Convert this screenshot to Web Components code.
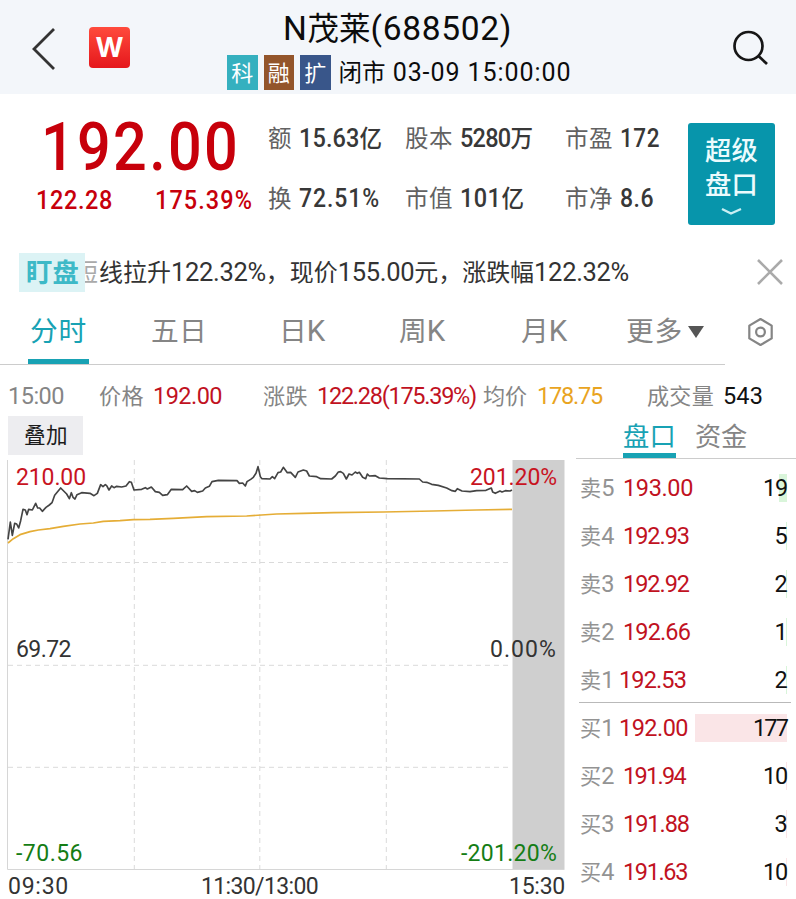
<!DOCTYPE html>
<html lang="zh-CN">
<head>
<meta charset="utf-8">
<title>N茂莱(688502)</title>
<style>
html,body{margin:0;background:#fff}
body{width:796px;height:899px;overflow:hidden;font-family:Roboto,"Noto Sans CJK SC",sans-serif}
</style>
</head>
<body>
<stock-page></stock-page>
<script>
const define=(name,html,setup)=>customElements.define(name,class extends HTMLElement{
  connectedCallback(){
    if(this.shadowRoot)return;
    this.attachShadow({mode:'open'}).innerHTML=typeof html==='function'?html(this):html;
    if(setup)setup(this);
  }
});

/* One line of mixed Latin and Chinese text, tracked to the width w; sx condenses the glyphs. */
define('fit-text',el=>{
  const runs=el.getAttribute('t').match(/[\u3000-\u9fff\uff00-\uffef]+|[^\u3000-\u9fff\uff00-\uffef]+/g);
  const one=runs.length===1;
  return `<style>:host{display:block;white-space:pre;line-height:1.2;flex:none}
  #t{display:inline-block;white-space:pre;transform-origin:0 50%}
  .c{font-size:var(--cjk,.94em);line-height:0;font-family:"Noto Sans CJK SC",sans-serif}</style><span id="t">`+
  runs.map(r=>/[\u3000-\u9fff\uff00-\uffef]/.test(r)?`<span class="c${one?' fit':''}">${r}</span>`:`<span class="fit">${r}</span>`).join('')+'</span>';
},el=>{
  const w=+el.getAttribute('w'),sx=+(el.getAttribute('sx')||1);
  if(!w)return;
  el.style.width=w+'px';
  const t=el.shadowRoot.getElementById('t'),fits=[...el.shadowRoot.querySelectorAll('.fit')];
  const n=fits.reduce((s,f)=>s+f.textContent.length,0);
  const ls=(w/sx-t.getBoundingClientRect().width)/n;
  fits.forEach(f=>f.style.letterSpacing=ls+'px');
  if(sx!==1)t.style.transform=`scaleX(${sx})`;
});

define('tag-badge',`<style>:host{display:flex;width:30.5px;height:35px;align-items:center;justify-content:center;color:#fff;font:400 22px/1 "Noto Sans CJK SC",sans-serif}
span{margin-top:-3px}</style><span><slot></slot></span>`);

define('page-header',`<style>
:host{display:flex;height:94px;background:#f3f6fa;color:#0c0c0c}
svg{display:block;flex:none}
.logo{margin:27px 0 0 29px;width:41px;height:41px;border-radius:4px;background:linear-gradient(#ff4b3c,#e5171c);color:#fff;font:700 27px/41px Inter,sans-serif;text-align:center;flex:none}
.mid{margin-left:97px;width:346px;padding-top:9px;flex:none}
.title{font-size:33.5px;margin-left:56px;line-height:40px}
.sub{display:flex;gap:6px;margin-top:6px;align-items:center}
.date{font-size:25px;margin-left:2px;line-height:35px}
.find{margin:30px 0 0 158px}
</style>
<svg style="margin:26px 0 0 30px" width="30" height="46" fill="none" stroke="#333" stroke-width="2.8"><path d="M24 3 4 23 24 43"/></svg>
<div class="logo">W</div>
<div class="mid"><fit-text class="title" w="229" t="N茂莱(688502)"></fit-text>
<div class="sub"><tag-badge style="background:#35b0bf">科</tag-badge><tag-badge style="background:#93552b">融</tag-badge><tag-badge style="background:#39568a">扩</tag-badge><fit-text class="date" w="233" t="闭市 03-09 15:00:00"></fit-text></div></div>
<svg class="find" width="40" height="40" fill="none" stroke="#161616" stroke-width="2.7"><circle cx="17.5" cy="16" r="14"/><path d="m27.5 26 8.5 8"/></svg>`);

define('quote-panel',`<style>
:host{display:flex;height:146px;color:#c7000b}
.price{padding:29px 0 0 36px;box-sizing:border-box;width:268px;flex:none}
.big{font-size:67.5px;line-height:48px;font-weight:500;margin-left:5px}
.chg{display:flex;gap:42px;margin-top:15.5px;font-size:25.5px;font-weight:500}
.chg fit-text{line-height:26px}
.stats{display:grid;grid-template-columns:137px 160px 123px;grid-template-rows:60px 60px;padding-top:15px;font-size:25px;height:120px;flex:none}
.stats fit-text{line-height:60px}
.s{display:flex}.l{color:#626262;margin-right:7px}.v{color:#383838;font-weight:500;--cjk:.96em}
.btn{margin-top:29px;width:87px;height:102px;background:#0795ab;border-radius:3px;color:#ecfbfd;font-size:28px;font-weight:500;padding:11px 0 0 17px;box-sizing:border-box;flex:none}
.btn fit-text{line-height:34px}
svg{display:block;margin:5px 0 0 16px}
</style>
<div class="price"><fit-text class="big" w="199" sx=".88" t="192.00"></fit-text><div class="chg"><fit-text w="77" sx=".92" t="122.28"></fit-text><fit-text w="98" sx=".92" t="175.39%"></fit-text></div></div>
<div class="stats">
<div class="s"><fit-text class="l" w="24" t="额"></fit-text><fit-text class="v" w="83" sx=".94" t="15.63亿"></fit-text></div>
<div class="s"><fit-text class="l" w="48" t="股本"></fit-text><fit-text class="v" w="73" sx=".94" t="5280万"></fit-text></div>
<div class="s"><fit-text class="l" w="48" t="市盈"></fit-text><fit-text class="v" w="40" sx=".9" t="172"></fit-text></div>
<div class="s"><fit-text class="l" w="24" t="换"></fit-text><fit-text class="v" w="81" sx=".92" t="72.51%"></fit-text></div>
<div class="s"><fit-text class="l" w="48" t="市值"></fit-text><fit-text class="v" w="64" sx=".94" t="101亿"></fit-text></div>
<div class="s"><fit-text class="l" w="48" t="市净"></fit-text><fit-text class="v" w="34" sx=".92" t="8.6"></fit-text></div>
</div>
<div class="btn"><fit-text w="53" t="超级"></fit-text><fit-text w="53" t="盘口"></fit-text><svg width="22" height="10" fill="none" stroke="#c9eff3" stroke-width="2.4"><path d="m1 2 9 4.5L20 2"/></svg></div>`);

define('news-ticker',`<style>
:host{display:flex;height:64px;align-items:center;color:#333}
.tag{width:66px;height:39px;margin-left:19px;background:#dcf3f5;color:#3db9c7;font-size:28px;font-weight:700;padding-left:7px;box-sizing:border-box;flex:none}
.tag fit-text{line-height:39px}
.cut{width:13px;overflow:hidden;display:flex;justify-content:flex-end;color:#aaa;flex:none;font-size:25.5px}
.msg{width:673px;font-size:25.5px;flex:none;display:flex}
.cut fit-text,.msg fit-text{line-height:40px}
</style><div class="tag"><fit-text w="53" t="盯盘"></fit-text></div><div class="cut"><fit-text w="24" t="短"></fit-text></div>
<div class="msg"><fit-text w="530" style="margin-left:1px" t="线拉升122.32%，现价155.00元，涨跌幅122.32%"></fit-text></div>
<svg style="margin-left:-14px" width="26" height="26" fill="none" stroke="#aaa" stroke-width="2.6"><path d="m1 1 24 24M25 1 1 25"/></svg>`);

define('period-tabs',`<style>
:host{display:flex;height:61px;color:#858585;font-size:29.5px}
.bar{height:60px;border-bottom:1px solid #ccc;display:grid;grid-template-columns:124px 127px 120px 122px 105px 60px 20px;padding-left:28px;width:697px;flex:none}
fit-text{line-height:54px}
.on{color:#18a2b4;width:61px;height:55px;border-bottom:5px solid #18a2b4}
.on fit-text{margin-left:2px}
.tri{width:0;height:0;border:8px solid transparent;border-top:12px solid #555;border-bottom:0;margin:22px 0 0 2px}
svg{margin:13px 0 0 22px}
</style><div class="bar"><div class="on"><fit-text w="57" t="分时"></fit-text></div><fit-text style="margin-left:-1px" w="56" t="五日"></fit-text><fit-text w="46" t="日K"></fit-text><fit-text w="47" t="周K"></fit-text><fit-text w="46" t="月K"></fit-text><fit-text w="57" t="更多"></fit-text><div class="tri"></div></div>
<svg width="28" height="30" fill="none" stroke="#858585" stroke-width="2.2"><path stroke-linejoin="round" d="m13.5 2 11.2 6.6v12.8L13.5 28 2.3 21.4V8.6Z"/><circle cx="13.5" cy="15" r="4.4"/></svg>`);

define('tick-info',`<style>
:host{display:grid;height:51px;grid-template-columns:91px 54px 110px 54px 166px 54px 109px 77px 50px;padding-left:8px;font-size:23.5px;color:#858585}
fit-text{line-height:63px}
.r{color:#c1121f}.o{color:#e9a41f}.k{color:#111}
</style><fit-text w="56" t="15:00"></fit-text><fit-text w="45" t="价格"></fit-text><fit-text class="r" w="69" t="192.00"></fit-text><fit-text w="45" t="涨跌"></fit-text><fit-text class="r" w="159" t="122.28(175.39%)"></fit-text><fit-text w="44" t="均价"></fit-text><fit-text class="o" w="65" t="178.75"></fit-text><fit-text w="67" style="margin-left:1px" t="成交量"></fit-text><fit-text class="k" w="40" t="543"></fit-text>`);

define('price-chart',`<style>
:host{display:block;width:568px;flex:none;color:#333;font-size:23px}
.add{margin-left:8px;width:75px;height:39px;background:#ededf0;color:#1b1b1b;box-sizing:border-box;padding-left:16px}
.add fit-text{line-height:39px}
.plot{position:relative;height:410px;margin:5px 0 0 7px;width:558px}
svg{position:absolute;inset:0}
.lab{position:absolute;inset:0 8px 0 9px;display:flex;flex-direction:column;justify-content:space-between;padding:2px 0 0}
.lab div{display:flex;justify-content:space-between}
.mid{margin-top:-33px}
fit-text{line-height:32px}
.r{color:#c8141f}.g{color:#157d15}
.axis{display:grid;grid-template-columns:193px 308px 60px;padding:1px 0 0 8px}
</style>
<div class="add"><fit-text w="44" t="叠加"></fit-text></div>
<div class="plot"><svg width="558" height="410" viewBox="7 460 558 410" fill="none">
<path fill="#cfcfcf" d="M512.5 460h52v409h-52z"/>
<path stroke="#dadada" stroke-dasharray="5 4" d="M134.3 460v409M259.8 460v409M386.3 460v409M8 562.5h500M8 665.3h500M8 767.3h500"/>
<path stroke="#d6d6d6" d="M7.5 460v409.5h557"/>
<g transform="translate(0 450) scale(.33333)" stroke-linejoin="round">
<polyline stroke="#e5ad36" stroke-width="5" points="24,279 40,266 60,254 90,245 115,240 150,236 190,229 240,222 280,219 310,214 360,212 400,209 450,208 520,205 620,200 740,198 830,192 910,190 1000,188 1150,186 1300,183 1430,180 1536,178"/>
<polyline stroke="#444" stroke-width="5" points="24,268 31,216 37,256 44,220 50,222 56,234 62,212 69,178 76,180 81,194 86,178 97,180 107,160 113,174 119,174 127,184 138,172 148,165 156,158 164,136 182,114 200,132 208,146 214,128 219,142 225,147 231,134 245,128 270,130 282,137 292,130 302,104 309,110 316,104 320,107 327,120 335,108 342,113 350,109 365,111 378,108 388,95 394,97 402,120 425,118 436,113 442,117 454,111 466,125 478,127 488,136 502,134 514,118 548,119 560,108 575,124 584,122 592,127 608,123 616,114 628,109 636,95 655,91 711,92 718,100 728,99 736,108 741,95 752,88 760,82 768,70 774,50 781,80 786,86 810,87 817,80 824,86 834,68 842,66 850,52 862,68 872,67 886,82 894,66 910,60 920,63 928,78 950,80 962,86 995,87 1006,78 1015,66 1022,65 1030,70 1039,87 1047,72 1056,75 1066,66 1072,70 1078,67 1088,82 1097,86 1102,72 1108,78 1126,77 1138,84 1162,86 1258,87 1268,96 1280,97 1295,103 1315,106 1340,114 1356,122 1366,124 1372,116 1386,123 1410,125 1430,122 1458,121 1474,114 1478,126 1486,130 1500,123 1506,126 1516,122 1530,123 1536,120"/></g></svg>
<div class="lab"><div class="r"><fit-text w="70" t="210.00"></fit-text><fit-text w="87" t="201.20%"></fit-text></div>
<div class="mid"><fit-text w="55" t="69.72"></fit-text><fit-text w="67" t="0.00%"></fit-text></div>
<div class="g"><fit-text w="67" t="-70.56"></fit-text><fit-text w="96" t="-201.20%"></fit-text></div></div></div>
<div class="axis"><fit-text w="61" t="09:30"></fit-text><fit-text w="117" t="11:30/13:00"></fit-text><fit-text w="56" t="15:30"></fit-text></div>`);

define('book-row',el=>{
  const a=k=>el.getAttribute(k),one=a('n').endsWith('1');
  return `<style>:host{display:flex;height:48px;align-items:center;position:relative;padding-left:12px;width:207px;font-size:23.5px;box-sizing:content-box}
  fit-text{line-height:48px;--cjk:.9em}.l{color:#939393}.p{color:#c1121f;margin-left:${one?8:9}px}
  .v{margin-left:auto;position:relative;color:#111}
  i{position:absolute;right:0;top:10px;height:28px;width:${a('bar')}px;background:${a('n')[0]==='卖'?'#d9f5da':'#fae5e7'}}</style>
  <i></i><fit-text class="l" w="${one?31:34}" t="${a('n')}"></fit-text><fit-text class="p" w="${a('w')}" t="${a('p')}"></fit-text><fit-text class="v" w="${a('v').length===3?34:a('v').length*11.5+1}" t="${a('v')}"></fit-text>`;
});

define('order-book',`<style>
:host{display:block;width:228px;flex:none}
nav{height:42px;display:flex;border-bottom:1px solid #ccc;margin-left:8px;padding-left:47px;color:#858585;font-size:28px}
.on{width:53px;height:37px;border-bottom:5px solid #18a2b4;color:#18a2b4;margin-right:19px}
nav fit-text{line-height:41px}
.rows{padding-top:5px;height:239px;box-sizing:border-box}
hr{border:0;height:1px;background:#b9b9b9;margin:4px 5px 1px 11px}
</style><nav><div class="on"><fit-text w="53" t="盘口"></fit-text></div><fit-text w="52" t="资金"></fit-text></nav>
<div class="rows"><book-row n="卖5" p="193.00" w="70" v="19" bar="8"></book-row><book-row n="卖4" p="192.93" w="66" v="5" bar="1"></book-row><book-row n="卖3" p="192.92" w="66" v="2" bar="1"></book-row><book-row n="卖2" p="192.66" w="67" v="1" bar="1"></book-row><book-row n="卖1" p="192.53" w="67" v="2" bar="1" style="height:47px"></book-row></div>
<hr>
<book-row n="买1" p="192.00" w="69" v="177" bar="92"></book-row><book-row n="买2" p="191.94" w="62" v="10" bar="1"></book-row><book-row n="买3" p="191.88" w="66" v="3" bar="1"></book-row><book-row n="买4" p="191.63" w="64" v="10" bar="1"></book-row>`);

define('stock-page',`<style>:host{display:block;width:796px;height:899px;overflow:hidden;background:#fff}.main{display:flex}</style>
<page-header></page-header><quote-panel></quote-panel><news-ticker></news-ticker><period-tabs></period-tabs><tick-info></tick-info>
<div class="main"><price-chart></price-chart><order-book></order-book></div>`);
</script>
</body>
</html>
